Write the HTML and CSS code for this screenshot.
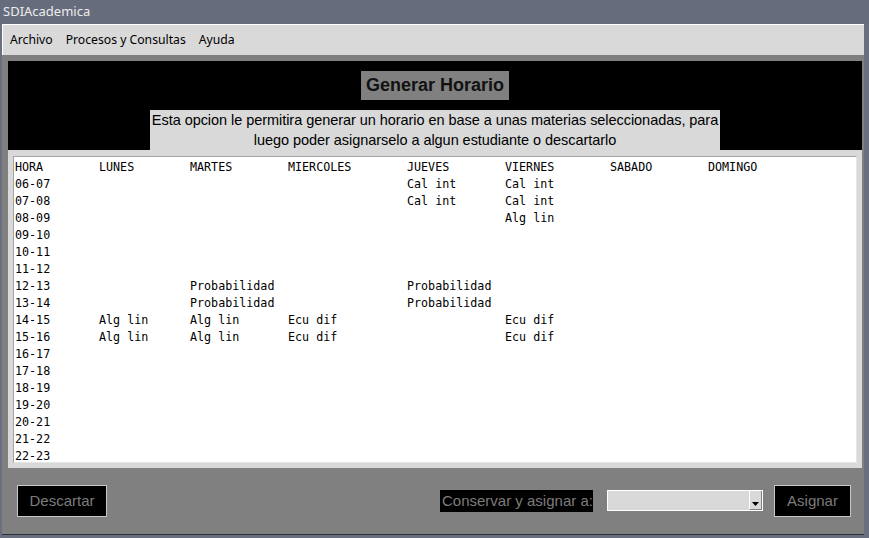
FILE: index.html
```html
<!DOCTYPE html>
<html lang="es">
<head>
<meta charset="utf-8">
<title>SDIAcademica</title>
<link rel="stylesheet" href="styles.css">
</head>
<body>
<div class="window">
  <div class="titlebar">SDIAcademica</div>
  <div class="frame">
    <div class="menubar">
      <span class="menu-item">Archivo</span>
      <span class="menu-item">Procesos y Consultas</span>
      <span class="menu-item">Ayuda</span>
    </div>
    <div class="content">
      <div class="header">
        <div class="title">Generar Horario</div>
        <div class="desc"><span class="line">Esta opcion le permitira generar un horario en base a unas materias seleccionadas, para</span><span class="line">luego poder asignarselo a algun estudiante o descartarlo</span></div>
      </div>
      <div class="text-wrap">
        <div class="textbox">
          <div class="row"><span>HORA</span><span>LUNES</span><span>MARTES</span><span>MIERCOLES</span><span>JUEVES</span><span>VIERNES</span><span>SABADO</span><span>DOMINGO</span></div>
          <div class="row"><span>06-07</span><span></span><span></span><span></span><span>Cal int</span><span>Cal int</span><span></span><span></span></div>
          <div class="row"><span>07-08</span><span></span><span></span><span></span><span>Cal int</span><span>Cal int</span><span></span><span></span></div>
          <div class="row"><span>08-09</span><span></span><span></span><span></span><span></span><span>Alg lin</span><span></span><span></span></div>
          <div class="row"><span>09-10</span></div>
          <div class="row"><span>10-11</span></div>
          <div class="row"><span>11-12</span></div>
          <div class="row"><span>12-13</span><span></span><span>Probabilidad</span><span></span><span>Probabilidad</span><span></span><span></span><span></span></div>
          <div class="row"><span>13-14</span><span></span><span>Probabilidad</span><span></span><span>Probabilidad</span><span></span><span></span><span></span></div>
          <div class="row"><span>14-15</span><span>Alg lin</span><span>Alg lin</span><span>Ecu dif</span><span></span><span>Ecu dif</span><span></span><span></span></div>
          <div class="row"><span>15-16</span><span>Alg lin</span><span>Alg lin</span><span>Ecu dif</span><span></span><span>Ecu dif</span><span></span><span></span></div>
          <div class="row"><span>16-17</span></div>
          <div class="row"><span>17-18</span></div>
          <div class="row"><span>18-19</span></div>
          <div class="row"><span>19-20</span></div>
          <div class="row"><span>20-21</span></div>
          <div class="row"><span>21-22</span></div>
          <div class="row"><span>22-23</span></div>
        </div>
      </div>
      <div class="footer">
        <div class="btn btn-descartar">Descartar</div>
        <div class="spacer"></div>
        <div class="label">Conservar y asignar a:</div>
        <div class="combo">
          <div class="combo-field"></div>
          <div class="combo-arrow"><svg width="7" height="4" viewBox="0 0 7 4"><polygon points="0,0 7,0 3.5,4" fill="#000"/></svg></div>
        </div>
        <div class="btn btn-asignar">Asignar</div>
      </div>
    </div>
  </div>
</div>
</body>
</html>
```
FILE: styles.css
```css
* { box-sizing: border-box; }
html, body { margin: 0; padding: 0; }
body {
  width: 869px;
  height: 538px;
  background: #6a6f7f;
  overflow: hidden;
}
.window {
  display: flex;
  flex-direction: column;
  height: 538px;
}
.titlebar {
  height: 24px;
  padding-left: 3px;
  font-family: "Noto Sans", sans-serif;
  font-size: 13px;
  line-height: 23px;
  color: #ececec;
  background: #676c7c;
}
.frame {
  display: flex;
  flex-direction: column;
  margin: 0 5px 0 2px;
  height: 511px;
  border-bottom: 1px solid #2e3038;
}
.menubar {
  height: 31px;
  background: #d9d9d9;
  border-top: 1px solid #ffffff;
  border-left: 1px solid #ffffff;
  display: flex;
  align-items: center;
  padding-left: 7px;
  gap: 13px;
  font-family: "Noto Sans", sans-serif;
  font-size: 12.2px;
  color: #000;
  padding-bottom: 1px;
}
.content {
  flex: 1;
  background: #808080;
  padding: 6px 2px 0 6px;
  display: flex;
  flex-direction: column;
}
.header {
  background: #000;
  height: 89px;
  display: flex;
  flex-direction: column;
  align-items: center;
  padding-top: 10px;
}
.title {
  background: #808080;
  height: 29px;
  width: 148px;
  text-align: center;
  font-family: "Liberation Sans", Arial, sans-serif;
  font-weight: bold;
  font-size: 18px;
  line-height: 29px;
  color: #111;
}
.desc {
  margin-top: 10px;
  background: #d9d9d9;
  width: 570px;
  height: 40px;
  display: flex;
  flex-direction: column;
  align-items: center;
  font-family: "Liberation Sans", Arial, sans-serif;
  font-size: 14.5px;
  line-height: 20px;
  color: #000;
  letter-spacing: -0.05px;
}
.line { white-space: nowrap; }
.text-wrap {
  background: #d9d9d9;
  height: 318px;
  padding: 6px 5px 5px 5px;
}
.textbox {
  background: #fff;
  height: 100%;
  border: 1px solid #a3a3a3;
  border-right-color: #e6e6e6;
  border-bottom-color: #e6e6e6;
  padding: 2px 0 0 1px;
  font-family: "DejaVu Sans Mono", monospace;
  font-size: 11.7px;
  line-height: 17px;
  color: #000;
}
.row {
  display: grid;
  grid-template-columns: 84px 91px 98px 119px 98px 105px 98px 100px;
  height: 17px;
  white-space: pre;
}
.row > span { justify-self: start; }
.footer {
  flex: 1;
  display: flex;
  align-items: center;
  padding: 0 11px 1px 9px;
}
.spacer { flex: 1; }
.btn {
  background: #000;
  border: 1px solid #c8c8c8;
  color: #7c7c7c;
  font-family: "Liberation Sans", Arial, sans-serif;
  font-size: 15px;
  height: 32px;
  line-height: 30px;
  text-align: center;
}
.btn-descartar { width: 90px; }
.btn-asignar { width: 77px; }
.label {
  background: #000;
  color: #7c7c7c;
  font-family: "Liberation Sans", Arial, sans-serif;
  font-size: 15px;
  height: 22px;
  line-height: 22px;
  width: 153px;
  padding-left: 2px;
  margin-right: 14px;
}
.combo {
  display: flex;
  width: 156px;
  height: 21px;
  border: 1px solid #fff;
  background: #d9d9d9;
  margin-right: 11px;
}
.combo-field { flex: 1; }
.combo-arrow {
  width: 13px;
  border-left: 1px solid #fff;
  border-right: 1px solid #808080;
  border-bottom: 1px solid #808080;
  display: flex;
  align-items: flex-end;
  justify-content: center;
  padding-bottom: 3px;
}
```
